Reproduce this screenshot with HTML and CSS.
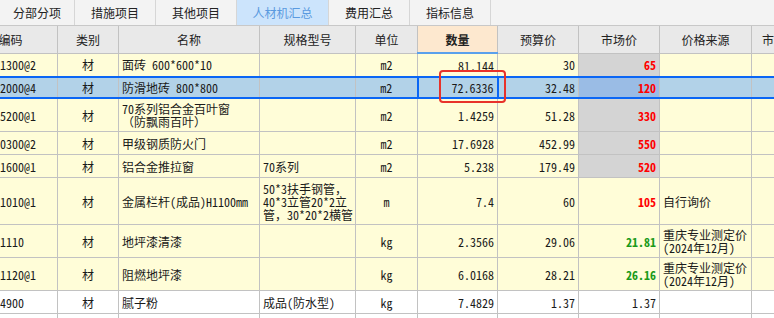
FILE: index.html
```html
<!DOCTYPE html>
<html lang="zh">
<head>
    <meta charset="UTF-8">
    <title>人材机汇总</title>
    <link rel="stylesheet" href="styles.css">
</head>
<body>
    <div class="tabs">
        <div class="tab">分部分项</div>
        <div class="tab">措施项目</div>
        <div class="tab">其他项目</div>
        <div class="tab active">人材机汇总</div>
        <div class="tab">费用汇总</div>
        <div class="tab">指标信息</div>
    </div>

    <div class="grid-wrap">
        <table class="grid">
            <colgroup>
                <col style="width:94px"><col style="width:61px"><col style="width:141px"><col style="width:96px"><col style="width:62px">
                <col style="width:80px"><col style="width:81px"><col style="width:81px"><col style="width:92px"><col style="width:80px">
            </colgroup>
            <tr class="head">
                <th>编码</th><th>类别</th><th>名称</th><th>规格型号</th><th>单位</th>
                <th class="qty-head">数量</th><th>预算价</th><th>市场价</th><th>价格来源</th><th class="cut">市场价合计</th>
            </tr>
            <tr class="r23">
                <td class="code">0409011300@2</td><td class="c">材</td><td class="txt">面砖 600*600*10</td><td class="txt"></td><td class="c">m2</td>
                <td class="num">81.144</td><td class="num">30</td><td class="num mk red">65</td><td></td><td></td>
            </tr>
            <tr class="r23 sel">
                <td class="code">0409012000@4</td><td class="c">材</td><td class="txt">防滑地砖 800*800</td><td class="txt"></td><td class="c">m2</td>
                <td class="num cur">72.6336<span class="mark"></span></td><td class="num">32.48</td><td class="num mk red">120</td><td></td><td></td>
            </tr>
            <tr class="r34">
                <td class="code">0407025200@1</td><td class="c">材</td><td class="txt">70系列铝合金百叶窗<br>（防飘雨百叶）</td><td class="txt"></td><td class="c">m2</td>
                <td class="num">1.4259</td><td class="num">51.28</td><td class="num mk red">330</td><td></td><td></td>
            </tr>
            <tr class="r23">
                <td class="code">0407010300@2</td><td class="c">材</td><td class="txt">甲级钢质防火门</td><td class="txt"></td><td class="c">m2</td>
                <td class="num">17.6928</td><td class="num">452.99</td><td class="num mk red">550</td><td></td><td></td>
            </tr>
            <tr class="r23">
                <td class="code">0407021600@1</td><td class="c">材</td><td class="txt">铝合金推拉窗</td><td class="txt">70系列</td><td class="c">m2</td>
                <td class="num">5.238</td><td class="num">179.49</td><td class="num mk red">520</td><td></td><td></td>
            </tr>
            <tr class="r47">
                <td class="code">0401031010@1</td><td class="c">材</td><td class="txt">金属栏杆(成品)H1100mm</td><td class="txt">50*3扶手钢管，40*3立管20*2立管，30*20*2横管</td><td class="c">m</td>
                <td class="num">7.4</td><td class="num">60</td><td class="num red">105</td><td class="txt">自行询价</td><td></td>
            </tr>
            <tr class="r33">
                <td class="code">0413011110</td><td class="c">材</td><td class="txt">地坪漆清漆</td><td class="txt"></td><td class="c">kg</td>
                <td class="num">2.3566</td><td class="num">29.06</td><td class="num green">21.81</td><td class="txt">重庆专业测定价(2024年12月)</td><td></td>
            </tr>
            <tr class="r33">
                <td class="code">0413011120@1</td><td class="c">材</td><td class="txt">阻燃地坪漆</td><td class="txt"></td><td class="c">kg</td>
                <td class="num">6.0168</td><td class="num">28.21</td><td class="num green">26.16</td><td class="txt">重庆专业测定价(2024年12月)</td><td></td>
            </tr>
            <tr class="r23 plain">
                <td class="code">0413014900</td><td class="c">材</td><td class="txt">腻子粉</td><td class="txt">成品(防水型)</td><td class="c">kg</td>
                <td class="num">7.4829</td><td class="num">1.37</td><td class="num">1.37</td><td></td><td></td>
            </tr>
            <tr class="r23 plain">
                <td></td><td></td><td></td><td></td><td></td><td></td><td></td><td></td><td></td><td></td>
            </tr>
        </table>
    </div>
</body>
</html>
```

FILE: styles.css
```css
body { margin: 0; background: #fff; font-family: "Noto Sans CJK SC", sans-serif; }

.tabs { display: flex; height: 26px; background: #f3f3f3; border-bottom: 1px solid #c8c8c8; box-sizing: border-box; }
.tab { width: 80px; display: flex; align-items: center; justify-content: center; font-size: 12px; color: #222; border-right: 1px solid #d6d6d6; }
.tab:first-child { width: 74px; }
.tab:nth-child(4) { width: 91px; }
.tab.active { background: #cce4fc; color: #5a9ae0; }

.grid-wrap { width: 774px; height: 292px; overflow: hidden; }
.grid { margin-left: -37px; border-collapse: collapse; table-layout: fixed; width: 868px; font-family: "Noto Sans Mono CJK SC", "Noto Sans CJK SC", monospace; font-size: 12px; color: #1a1a1a; }
.grid th, .grid td { border: 1px solid #c2c2c2; padding: 0 3px; line-height: 13px; overflow: hidden; white-space: nowrap; background: #fffdd8; }
.grid th { height: 26px; background: #e9e9e9; font-family: "Noto Sans CJK SC", sans-serif; font-weight: normal; color: #222; text-align: center; border-top: none; }
.grid th.qty-head { background: #fde8cf; font-weight: bold; border-bottom: 2px solid #5aa0ec; }
.grid th.cut { text-align: left; padding-left: 10px; }

.r23 td { height: 22px; }
.r34 td { height: 32px; }
.r47 td { height: 46px; }
.r33 td { height: 32px; }

.grid td.txt { text-align: left; white-space: normal; padding: 0 1px 0 3px; }
.grid td.c { text-align: center; }
.grid td.num { text-align: right; }
.grid td.code { padding-left: 0; }
.grid td.mk { background: #d4d4d4; }
.red { color: #ff0000; font-weight: bold; }
.green { color: #1a9a1a; font-weight: bold; }

.grid tr.sel td { height: 19px; background: #b2d2e8; border-top: 2px solid #0a66f5; border-bottom: 2px solid #0a66f5; }
.grid tr.sel td.mk { background: #9abce5; }
.grid tr.sel td.cur { border-left: 2px solid #0a66f5; border-right: 2px solid #0a66f5; position: relative; overflow: visible; }
.mark { position: absolute; left: 20px; top: -8px; width: 63px; height: 29px; border: 2px solid #e8322a; border-radius: 4px; }

.grid tr.plain td { background: #fff; }
```
